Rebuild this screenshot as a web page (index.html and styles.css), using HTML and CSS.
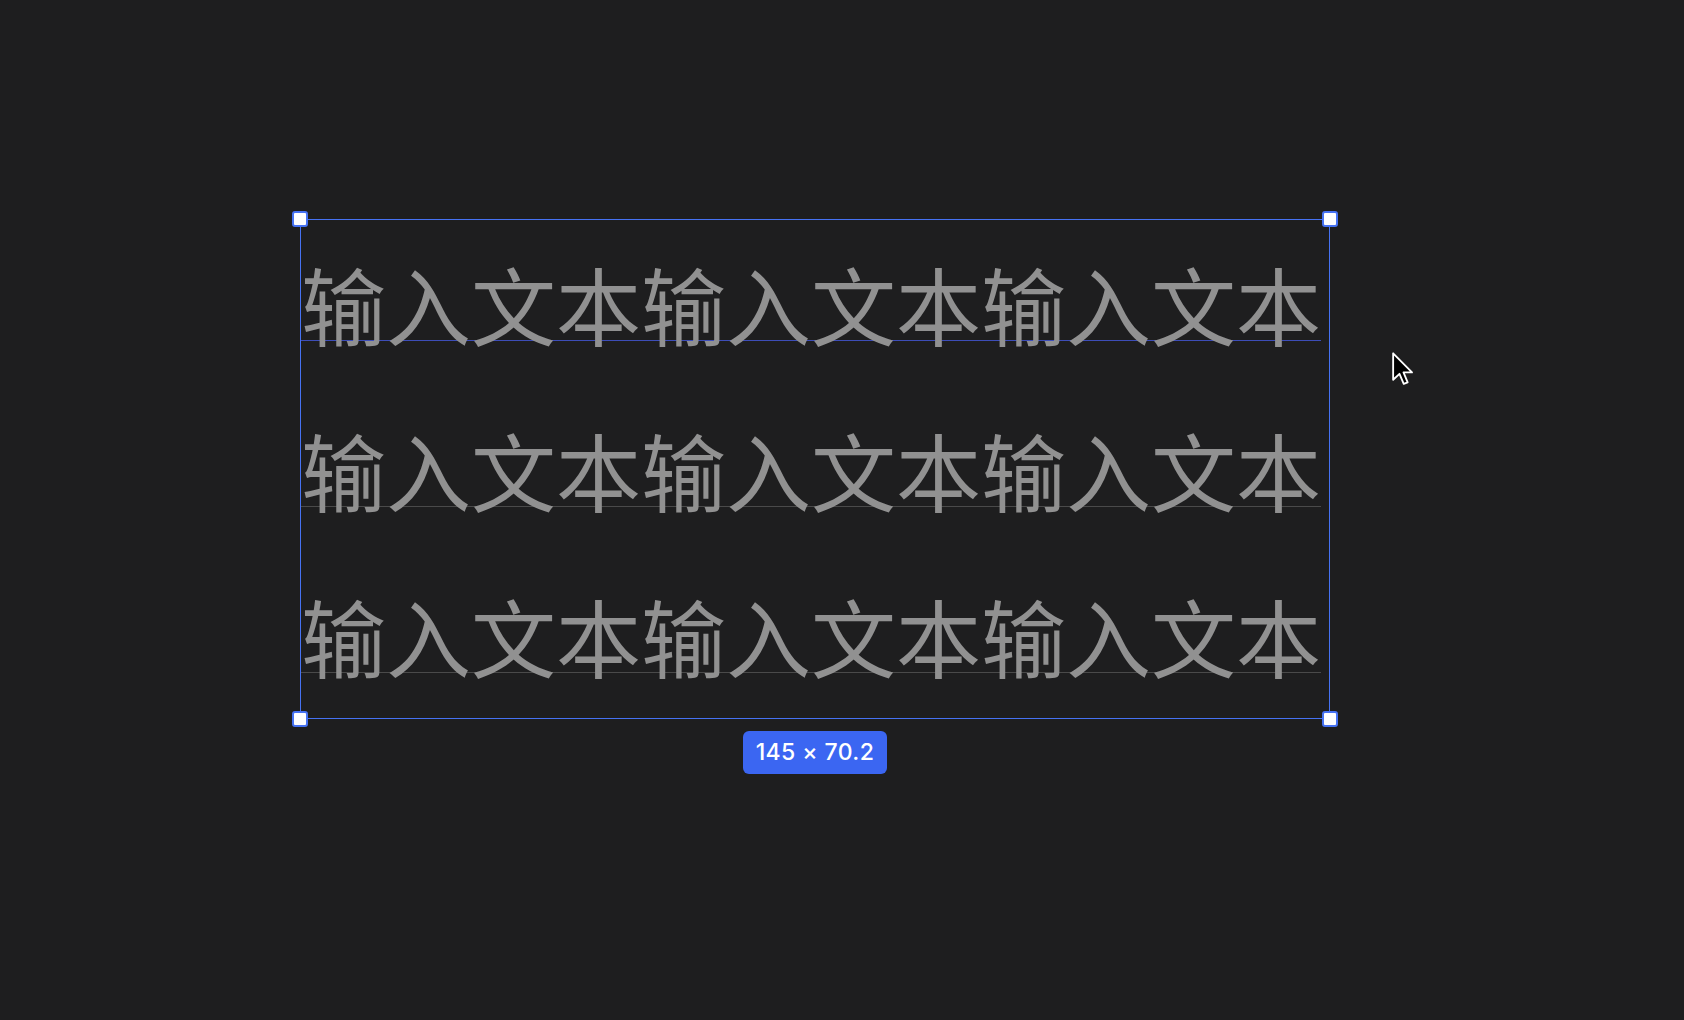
FILE: index.html
```html
<!DOCTYPE html>
<html>
<head>
    <title>Text layer</title>
    <link rel="stylesheet" href="styles.css">
</head>
<body>
    <div class="canvas">
        <div class="selection">
            <!-- Text layer with its bounding box -->
            <div class="frame">
                <div class="text-row first">输入文本输入文本输入文本</div>
                <div class="text-row">输入文本输入文本输入文本</div>
                <div class="text-row">输入文本输入文本输入文本</div>

                <span class="handle top-left"></span>
                <span class="handle top-right"></span>
                <span class="handle bottom-left"></span>
                <span class="handle bottom-right"></span>
            </div>
            <div class="size-badge">145 × 70.2</div>
        </div>

        <svg class="pointer" width="23" height="36" viewBox="0 0 20 31">
            <path d="M1 1 L1 24 L6.5 18.8 L10.2 27.6 L13.6 26.2 L10 17.6 L17.4 17.6 Z" fill="#000" stroke="#fff" stroke-width="1.6" stroke-linejoin="round"/>
        </svg>
    </div>
</body>
</html>
```

FILE: styles.css
```css
body {
    margin: 0;
    background-color: #1e1e1f;
    font-family: "Inter", "Liberation Sans", sans-serif;
}
.canvas {
    position: relative;
    width: 1684px;
    height: 1020px;
    padding: 219px 0 0 300px;
    box-sizing: border-box;
}
.selection {
    display: flex;
    flex-direction: column;
    align-items: center;
    gap: 12px;
    width: 1030px;
}
.frame {
    position: relative;
    width: 1030px;
    border: 1px solid #4672f2;
    box-sizing: border-box;
}
.text-row {
    width: max-content;
    font-family: "Noto Sans CJK SC", sans-serif;
    font-size: 85px;
    line-height: 166px;
    color: #919191;
    white-space: nowrap;
    /* baseline guide */
    background-image: linear-gradient(to bottom, transparent 120px, #4a4a4a 120px, #4a4a4a 121px, transparent 121px);
}
.text-row.first {
    background-image: linear-gradient(to bottom, transparent 120px, #3d4db8 120px, #3d4db8 121px, transparent 121px);
}
.handle {
    position: absolute;
    width: 12px;
    height: 12px;
    background-color: #fff;
    border: 2px solid #4672f2;
    border-radius: 3px;
}
.handle.top-left { top: -9px; left: -9px; }
.handle.top-right { top: -9px; right: -9px; }
.handle.bottom-left { bottom: -9px; left: -9px; }
.handle.bottom-right { bottom: -9px; right: -9px; }
.size-badge {
    background-color: #3b66f2;
    color: #fff;
    font-size: 23px;
    font-weight: 500;
    letter-spacing: 0.4px;
    line-height: 43px;
    padding: 0 13px;
    border-radius: 6px;
}
.pointer {
    position: absolute;
    left: 1392px;
    top: 352px;
}
```
